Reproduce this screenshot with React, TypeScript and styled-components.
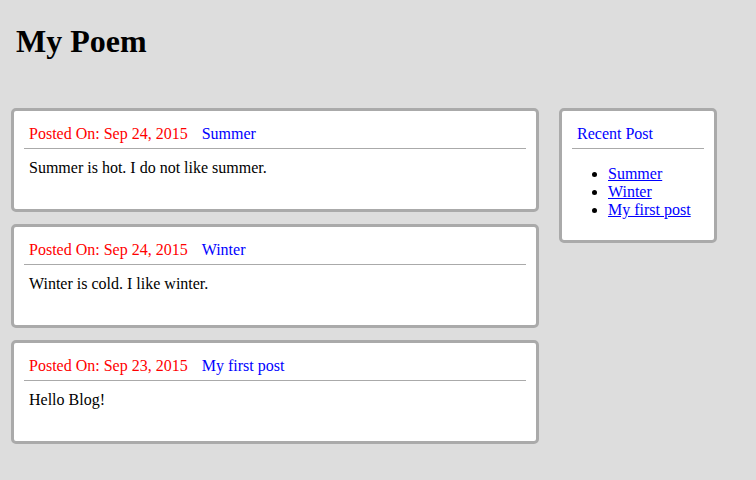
import React from "react";
import styled, { createGlobalStyle } from "styled-components";

const GlobalStyle = createGlobalStyle`
  html, body {
    margin: 0;
    padding: 0;
    background: #dddddd;
    font-family: "Liberation Serif", "Times New Roman", serif;
    font-size: 16px;
    color: #000;
  }
`;

const Page = styled.div`
  min-height: 480px;
  background: #dddddd;
`;

const Title = styled.h1`
  margin: 0;
  padding: 23px 16px 0;
  font-size: 32px;
  line-height: 36px;
  font-weight: bold;
`;

const Layout = styled.div`
  display: flex;
  align-items: flex-start;
  gap: 20px;
  margin-top: 49px;
  padding: 0 11px;
`;

const Main = styled.main`
  width: 528px;
  display: flex;
  flex-direction: column;
  gap: 12px;
`;

const Card = styled.div<{ $width?: number }>`
  box-sizing: border-box;
  width: ${(p) => (p.$width ? `${p.$width}px` : "100%")};
  background: #ffffff;
  border: 3px solid #aaaaaa;
  border-radius: 5px;
  padding: 10px;
`;

const CardHeader = styled.div`
  padding: 4px 5px 5px;
  border-bottom: 1px solid #aaaaaa;
  line-height: 18px;
  display: flex;
  align-items: baseline;
`;

const Posted = styled.span`
  color: #ff0000;
`;

const TitleLink = styled.a`
  color: #0000ff;
  text-decoration: none;
  margin-left: 14px;
  cursor: pointer;
`;

const SideTitle = styled.span`
  color: #0000ff;
`;

const CardBody = styled.p`
  margin: 0;
  padding: 10px 5px 22px;
  line-height: 18px;
`;

const List = styled.ul`
  margin: 16px 0 11px;
  padding-left: 36px;
  line-height: 18px;
`;

const ListLink = styled.a`
  color: #0000ff;
  text-decoration: underline;
  cursor: pointer;
`;

const posts = [
  { date: "Sep 24, 2015", title: "Summer", body: "Summer is hot. I do not like summer." },
  { date: "Sep 24, 2015", title: "Winter", body: "Winter is cold. I like winter." },
  { date: "Sep 23, 2015", title: "My first post", body: "Hello Blog!" },
];

export default function App() {
  return (
    <Page>
      <GlobalStyle />
      <Title>My Poem</Title>
      <Layout>
        <Main>
          {posts.map((p) => (
            <Card key={p.title}>
              <CardHeader>
                <Posted>Posted On: {p.date}</Posted>
                <TitleLink>{p.title}</TitleLink>
              </CardHeader>
              <CardBody>{p.body}</CardBody>
            </Card>
          ))}
        </Main>
        <Card as="aside" $width={158}>
          <CardHeader>
            <SideTitle>Recent Post</SideTitle>
          </CardHeader>
          <List>
            {posts.map((p) => (
              <li key={p.title}>
                <ListLink>{p.title}</ListLink>
              </li>
            ))}
          </List>
        </Card>
      </Layout>
    </Page>
  );
}
